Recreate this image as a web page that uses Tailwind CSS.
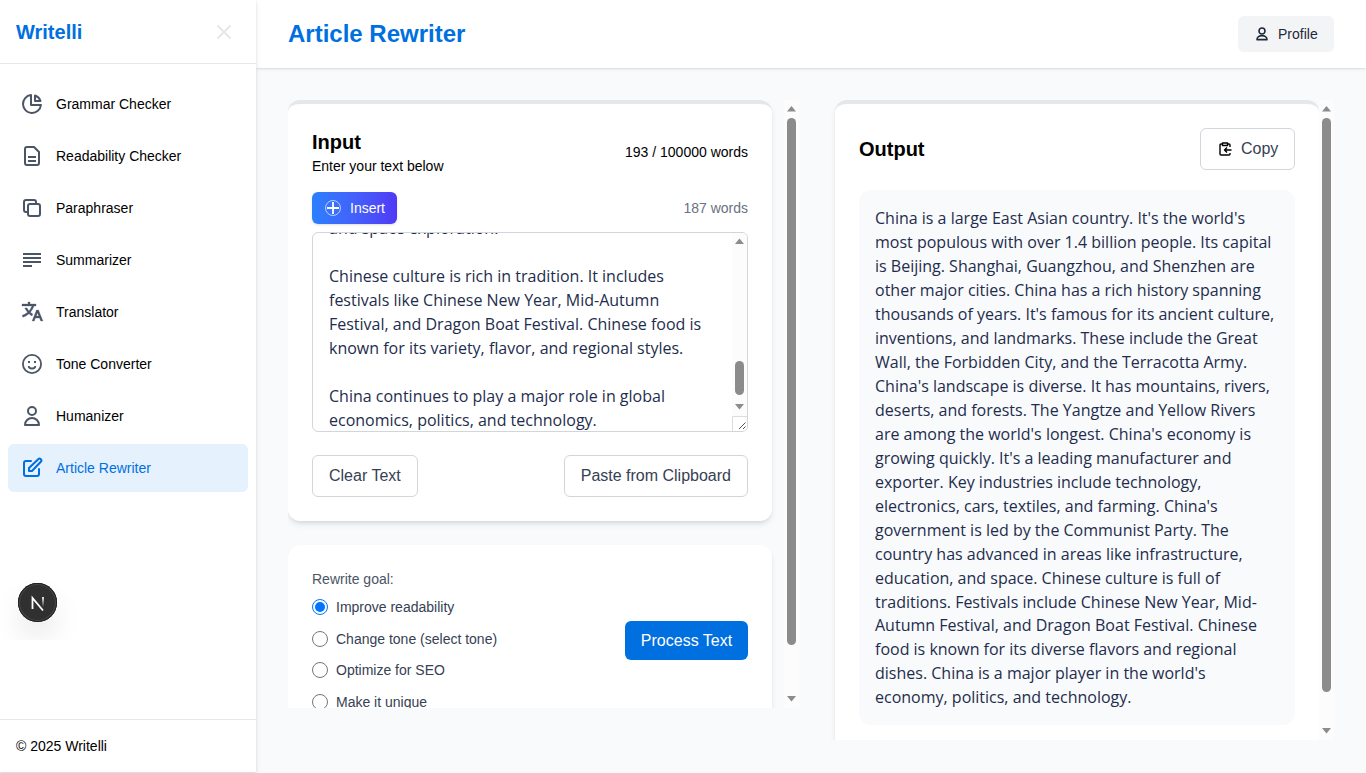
<!DOCTYPE html>
<html lang="en">
<head>
<meta charset="utf-8">
<title>Writelli - Article Rewriter</title>
<script src="https://cdn.jsdelivr.net/npm/@tailwindcss/browser@4"></script>
</head>
<body class="flex h-screen overflow-hidden bg-[#f9fafb] font-['Liberation_Sans',Arial,sans-serif] text-black">

<aside class="relative z-10 flex h-[772px] w-64 shrink-0 flex-col bg-white shadow-[0_1px_3px_rgba(0,0,0,0.12),0_4px_8px_rgba(0,0,0,0.05)]">
  <div class="flex h-16 shrink-0 items-center justify-between border-b border-gray-200 px-4">
    <span class="text-xl font-bold text-[#0070e0]">Writelli</span>
    <svg class="mr-1 size-6 text-gray-200" viewBox="0 0 24 24" fill="none" stroke="currentColor" stroke-width="2" stroke-linecap="round"><path d="M6 6l12 12M18 6L6 18"/></svg>
  </div>
  <nav class="flex flex-1 flex-col gap-1 px-2 pt-4 text-sm text-black">
    <a class="flex h-12 items-center gap-3 px-3"><svg class="size-6 text-gray-600" viewBox="0 0 24 24" fill="none" stroke="currentColor" stroke-width="2" stroke-linejoin="round"><path d="M11 3.050A9 9 0 1 0 20.950 13H11zM15 3.500V9h5.500A9 9 0 0 0 15 3.500z"/></svg>Grammar Checker</a>
    <a class="flex h-12 items-center gap-3 px-3"><svg class="size-6 text-gray-600" viewBox="0 0 24 24" fill="none" stroke="currentColor" stroke-width="2" stroke-linejoin="round"><path d="M14 3H7a2 2 0 0 0-2 2v14a2 2 0 0 0 2 2h10a2 2 0 0 0 2-2V8zM8 13h8M8 17h8"/></svg>Readability Checker</a>
    <a class="flex h-12 items-center gap-3 px-3"><svg class="size-6 text-gray-600" viewBox="0 0 24 24" fill="none" stroke="currentColor" stroke-width="2"><rect x="8" y="8" width="12" height="12" rx="2"/><path d="M8 16H6a2 2 0 0 1-2-2V6a2 2 0 0 1 2-2h8a2 2 0 0 1 2 2v2"/></svg>Paraphraser</a>
    <a class="flex h-12 items-center gap-3 px-3"><svg class="size-6 text-gray-600" viewBox="0 0 24 24" fill="none" stroke="currentColor" stroke-width="2"><path d="M3 6h18M3 10h18M3 14h18M3 18h9"/></svg>Summarizer</a>
    <a class="flex h-12 items-center gap-3 px-3"><svg class="size-6 text-gray-600" viewBox="0 0 24 24" fill="currentColor" stroke="currentColor" stroke-width=".3"><path d="M18.500 10l4.400 11h-2.155l-1.201-3h-4.090l-1.199 3h-2.154L16.500 10h2zM10 2v2h6v2h-1.968a18.222 18.222 0 0 1-3.620 6.301 14.864 14.864 0 0 0 2.336 1.707l-.751 1.878A17.015 17.015 0 0 1 9 13.725a16.676 16.676 0 0 1-6.201 3.548l-.536-1.929a14.700 14.700 0 0 0 5.327-3.042A18.078 18.078 0 0 1 4.767 8h2.240A16.032 16.032 0 0 0 9 10.877a16.165 16.165 0 0 0 2.910-4.876L2 6V4h6V2h2zm7.500 10.885L16.253 16h2.492L17.500 12.885z"/></svg>Translator</a>
    <a class="flex h-12 items-center gap-3 px-3"><svg class="size-6 text-gray-600" viewBox="0 0 24 24" fill="none" stroke="currentColor" stroke-width="1.800"><circle cx="12" cy="12" r="9.100"/><path d="M8.700 14a3.300 2.500 0 0 0 6.600 0M8 10h2M14 10h2"/></svg>Tone Converter</a>
    <a class="flex h-12 items-center gap-3 px-3"><svg class="size-6 text-gray-600" viewBox="0 0 24 24" fill="none" stroke="currentColor" stroke-width="2" stroke-linejoin="round"><circle cx="12" cy="7" r="4"/><path d="M5 21a7 7 0 0 1 14 0z"/></svg>Humanizer</a>
    <a class="flex h-12 items-center gap-3 rounded-md bg-[#e6f1fe] px-3 text-[#0070e0]"><svg class="size-6" viewBox="0 0 24 24" fill="none" stroke="currentColor" stroke-width="2" stroke-linecap="round" stroke-linejoin="round"><path d="M11 5H6a2 2 0 0 0-2 2v11a2 2 0 0 0 2 2h11a2 2 0 0 0 2-2v-5M18.200 3.200a1.800 1.800 0 0 1 2.600 2.600L12 15H9v-3z"/></svg>Article Rewriter</a>
  </nav>
  <div class="flex h-[53px] shrink-0 items-center border-t border-gray-200 px-4 text-sm">© 2025 Writelli</div>
  <div class="absolute left-0 top-[560px] h-20 w-24 overflow-hidden">
    <div class="ml-[18px] mt-[23px] flex size-[39px] items-center justify-center rounded-full bg-[#303030] shadow-[inset_0_0_0_1px_#222,inset_0_0_0_2px_#484848,0_16px_32px_-8px_rgba(0,0,0,0.24)]">
      <svg class="size-5" viewBox="0 0 20 20" fill="none" stroke-width="1.800"><defs><linearGradient id="fade" x1="0" y1="4" x2="0" y2="14" gradientUnits="userSpaceOnUse"><stop stop-color="#fff"/><stop offset="1" stop-color="#fff" stop-opacity="0"/></linearGradient></defs><path d="M4.500 16V5L15 17.500" stroke="#fff"/><path d="M15 4v10" stroke="url(#fade)"/></svg>
    </div>
  </div>
</aside>

<div class="flex min-w-0 flex-1 flex-col">
  <header class="flex h-[68px] shrink-0 items-center justify-between bg-white px-8 shadow-sm">
    <h1 class="text-2xl font-bold text-[#0070e0]">Article Rewriter</h1>
    <button class="flex h-9 w-24 items-center rounded-md bg-gray-100 pl-4 text-sm text-gray-800"><svg class="mr-2 size-4" viewBox="0 0 24 24" fill="none" stroke="currentColor" stroke-width="2.400" stroke-linejoin="round"><circle cx="12" cy="7.500" r="4.500"/><path d="M4.500 20.500c0-8 15-8 15 0z"/></svg>Profile</button>
  </header>

  <main class="flex items-start gap-9 pl-8 pt-8">
    <section class="flex h-[608px] w-[511px] overflow-hidden">
      <div class="w-[496px] overflow-hidden">
        <div class="h-[421px] w-[484px] rounded-xl border-t-4 border-gray-200 bg-white p-6 shadow-md">
          <div class="flex items-center justify-between">
            <div>
              <h2 class="text-xl font-bold leading-7">Input</h2>
              <p class="text-sm">Enter your text below</p>
            </div>
            <span class="text-sm">193 / 100000 words</span>
          </div>
          <div class="mt-4 flex items-center justify-between">
            <button class="flex h-8 w-[85px] items-center gap-2 rounded-md bg-linear-to-r from-[#2b7fff] to-[#4f39f6] pl-3 text-sm text-white shadow-sm"><svg class="size-[18px]" viewBox="0 0 18 18" fill="none" stroke="#fff"><circle cx="9" cy="9" r="7.500" stroke-opacity=".65"/><path d="M9 3v12M3 9h12" stroke-width="1.800"/></svg>Insert</button>
            <span class="text-sm text-gray-500">187 words</span>
          </div>
          <div class="mt-2 flex h-[200px] overflow-hidden rounded-md border border-gray-300 bg-white">
            <div class="-mb-px flex flex-1 flex-col justify-end overflow-hidden whitespace-nowrap pl-4 font-['Open_Sans','Noto_Sans',sans-serif] text-base leading-6 text-[#1e2d4d]">
              <p>and space exploration.</p>
              <p class="mt-6">Chinese culture is rich in tradition. It includes<br>festivals like Chinese New Year, Mid-Autumn<br>Festival, and Dragon Boat Festival. Chinese food is<br>known for its variety, flavor, and regional styles.</p>
              <p class="mt-6">China continues to play a major role in global<br>economics, politics, and technology.</p>
            </div>
            <div class="flex w-[15px] flex-col items-center bg-[#fcfcfc]">
              <svg class="mt-[5px] h-[6px] w-[9px] shrink-0" viewBox="0 0 9 6" fill="#8b8b8b"><path d="M4.500 0.500L9 6H0z"/></svg>
              <div class="mt-[117px] h-[34px] w-[9px] shrink-0 rounded-full bg-[#8b8b8b]"></div>
              <svg class="mt-[9px] h-[6px] w-[9px] shrink-0" viewBox="0 0 9 6" fill="#8b8b8b"><path d="M4.500 5.500L9 0H0z"/></svg>
              <svg class="mt-auto size-[15px] shrink-0 bg-white" viewBox="0 0 15 15" fill="none"><path d="M.5 15V.5H15" stroke="#dcdcdc"/><path d="M7 13l6.500-6.500M11 13l2.500-2.500" stroke="#555"/></svg>
            </div>
          </div>
          <div class="mt-[23px] flex justify-between text-base text-gray-700">
            <button class="h-[42px] rounded-md border border-gray-300 px-4">Clear Text</button>
            <button class="h-[42px] rounded-md border border-gray-300 px-4">Paste from Clipboard</button>
          </div>
        </div>
        <div class="mt-6 flex h-60 w-[484px] items-start justify-between rounded-xl bg-white p-6 shadow-md">
          <div class="text-sm text-gray-700">
            <p class="mb-2 text-gray-600">Rewrite goal:</p>
            <div class="flex flex-col gap-[11.600px]">
              <label class="flex items-center gap-2"><span class="flex size-4 items-center justify-center rounded-full border border-[#0075ff]"><span class="size-2.5 rounded-full bg-[#0075ff]"></span></span>Improve readability</label>
              <label class="flex items-center gap-2"><span class="size-4 rounded-full border border-[#767676]"></span>Change tone (select tone)</label>
              <label class="flex items-center gap-2"><span class="size-4 rounded-full border border-[#767676]"></span>Optimize for SEO</label>
              <label class="flex items-center gap-2"><span class="size-4 rounded-full border border-[#767676]"></span>Make it unique</label>
            </div>
          </div>
          <button class="mt-[52px] h-[39px] w-[123px] rounded-md bg-[#0070e0] text-base text-white">Process Text</button>
        </div>
      </div>
      <div class="flex w-[15px] flex-col items-center bg-[#fcfcfc]">
        <svg class="mt-1.5 h-[6px] w-[9px] shrink-0" viewBox="0 0 9 6" fill="#8b8b8b"><path d="M4.500 0L9 5.500H0z"/></svg>
        <div class="mt-1.5 h-[527px] w-[9px] shrink-0 rounded-full bg-[#8b8b8b]"></div>
        <svg class="mt-auto mb-1.5 h-[6px] w-[9px] shrink-0" viewBox="0 0 9 6" fill="#8b8b8b"><path d="M4.500 5.500L9 0H0z"/></svg>
      </div>
    </section>

    <section class="-ml-9 flex h-[640px] w-[535px] overflow-hidden pl-9">
      <div class="h-[760px] w-[484px] shrink-0 rounded-xl border-t-4 border-gray-200 bg-white p-6 shadow-md">
        <div class="flex items-center justify-between">
          <h2 class="text-xl font-bold">Output</h2>
          <button class="flex h-[42px] w-[95px] items-center rounded-md border border-gray-300 pl-4 text-base text-gray-700"><svg class="mr-2 size-4 text-black" viewBox="0 0 16 16" fill="none" stroke="currentColor" stroke-width="1.400" stroke-linejoin="round"><path d="M5.500 3H4a1 1 0 0 0-1 1v9a1 1 0 0 0 1 1h8a1 1 0 0 0 1-1v-1M10.500 3H12a1 1 0 0 1 1 1v2"/><path d="M5.500 2h5v2.500h-5zM14.500 9H8M10 6.500L7.500 9 10 11.500"/></svg>Copy</button>
        </div>
        <div class="mt-5 h-[535px] whitespace-nowrap rounded-xl bg-[#f9fafb] px-4 pt-[17.280px] font-['Open_Sans','Noto_Sans',sans-serif] text-base leading-[23.960px] text-[#1e2d4d]">China is a large East Asian country. It's the world's<br>most populous with over 1.4 billion people. Its capital<br>is Beijing. Shanghai, Guangzhou, and Shenzhen are<br>other major cities. China has a rich history spanning<br>thousands of years. It's famous for its ancient culture,<br>inventions, and landmarks. These include the Great<br>Wall, the Forbidden City, and the Terracotta Army.<br>China's landscape is diverse. It has mountains, rivers,<br>deserts, and forests. The Yangtze and Yellow Rivers<br>are among the world's longest. China's economy is<br>growing quickly. It's a leading manufacturer and<br>exporter. Key industries include technology,<br>electronics, cars, textiles, and farming. China's<br>government is led by the Communist Party. The<br>country has advanced in areas like infrastructure,<br>education, and space. Chinese culture is full of<br>traditions. Festivals include Chinese New Year, Mid-<br>Autumn Festival, and Dragon Boat Festival. Chinese<br>food is known for its diverse flavors and regional<br>dishes. China is a major player in the world's<br>economy, politics, and technology.</div>
      </div>
      <div class="flex w-[15px] flex-col items-center bg-[#fcfcfc]">
        <svg class="mt-1.5 h-[6px] w-[9px] shrink-0" viewBox="0 0 9 6" fill="#8b8b8b"><path d="M4.500 0L9 5.500H0z"/></svg>
        <div class="mt-1.5 h-[574px] w-[9px] shrink-0 rounded-full bg-[#8b8b8b]"></div>
        <svg class="mt-auto mb-1.5 h-[6px] w-[9px] shrink-0" viewBox="0 0 9 6" fill="#8b8b8b"><path d="M4.500 5.500L9 0H0z"/></svg>
      </div>
    </section>
  </main>
</div>
</body>
</html>
